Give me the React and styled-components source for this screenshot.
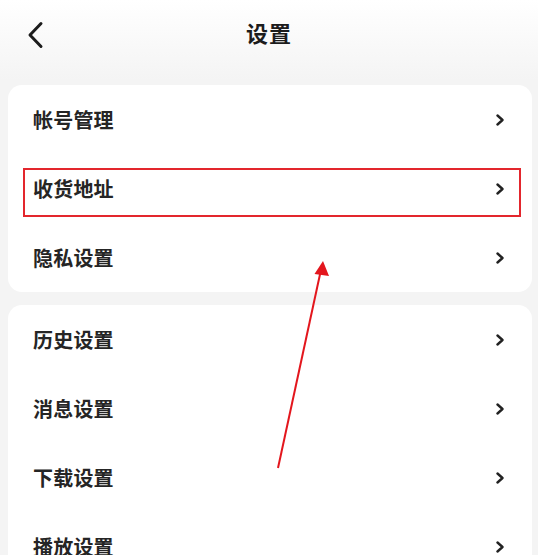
import styled, { createGlobalStyle } from "styled-components";

const GlobalStyle = createGlobalStyle`
  html, body {
    margin: 0;
    padding: 0;
    background: #f4f4f4;
  }
  body {
    font-family: "Noto Sans CJK SC", "Noto Sans", sans-serif;
  }
`;

const Page = styled.div`
  position: relative;
  width: 538px;
  height: 555px;
  overflow: hidden;
  background: linear-gradient(180deg, #ffffff 0px, #f4f4f4 80px, #f4f4f4 100%);
`;

const Header = styled.div`
  position: relative;
  height: 70px;
  display: flex;
  align-items: center;
  justify-content: center;
  margin-bottom: 15px;
`;

const BackButton = styled.button`
  position: absolute;
  left: 22px;
  top: 19px;
  width: 26px;
  height: 32px;
  padding: 0;
  border: none;
  background: none;
  display: flex;
  align-items: center;
  justify-content: center;
`;

const Title = styled.h1`
  margin: 0 0 6px;
  font-size: 22px;
  font-weight: 700;
  color: #1c1c1c;
  letter-spacing: 1px;
`;

const Card = styled.div`
  margin: 0 6px 13px 8px;
  background: #fff;
  border-radius: 14px;
  display: flex;
  flex-direction: column;
`;

const Row = styled.div`
  position: relative;
  height: 69px;
  display: flex;
  align-items: center;
  justify-content: space-between;
  padding: 0 27px 0 25px;
`;

const Label = styled.span`
  font-size: 20px;
  font-weight: 700;
  color: #252525;
  letter-spacing: 0.2px;
`;

const Highlight = styled.div`
  position: absolute;
  left: 15px;
  right: 11px;
  top: 14px;
  bottom: 6px;
  border: 2px solid #e3262d;
  pointer-events: none;
`;

const ArrowLayer = styled.svg`
  position: absolute;
  left: 0;
  top: 0;
  pointer-events: none;
`;

function Chevron() {
  return (
    <svg width="10" height="12" viewBox="0 0 10 12">
      <path
        d="M2.5 1.5 L7.5 6 L2.5 10.5"
        fill="none"
        stroke="#222"
        strokeWidth="2.4"
        strokeLinecap="round"
        strokeLinejoin="round"
      />
    </svg>
  );
}

const groups = [
  ["帐号管理", "收货地址", "隐私设置"],
  ["历史设置", "消息设置", "下载设置", "播放设置"],
];

export default function App() {
  return (
    <>
      <GlobalStyle />
      <Page>
        <Header>
          <BackButton>
            <svg width="18" height="28" viewBox="0 0 18 28">
              <path
                d="M15 2.5 L4 14 L15 25.5"
                fill="none"
                stroke="#1c1c1c"
                strokeWidth="3"
                strokeLinecap="round"
                strokeLinejoin="round"
              />
            </svg>
          </BackButton>
          <Title>设置</Title>
        </Header>
        {groups.map((items, g) => (
          <Card key={g}>
            {items.map((label) => (
              <Row key={label}>
                <Label>{label}</Label>
                <Chevron />
                {label === "收货地址" && <Highlight />}
              </Row>
            ))}
          </Card>
        ))}
        <ArrowLayer width="538" height="555" viewBox="0 0 538 555">
          <line x1="278" y1="468" x2="320.5" y2="272" stroke="#e3161d" strokeWidth="2" />
          <polygon points="323,261 314.5,274 329,276" fill="#e3161d" />
        </ArrowLayer>
      </Page>
    </>
  );
}
